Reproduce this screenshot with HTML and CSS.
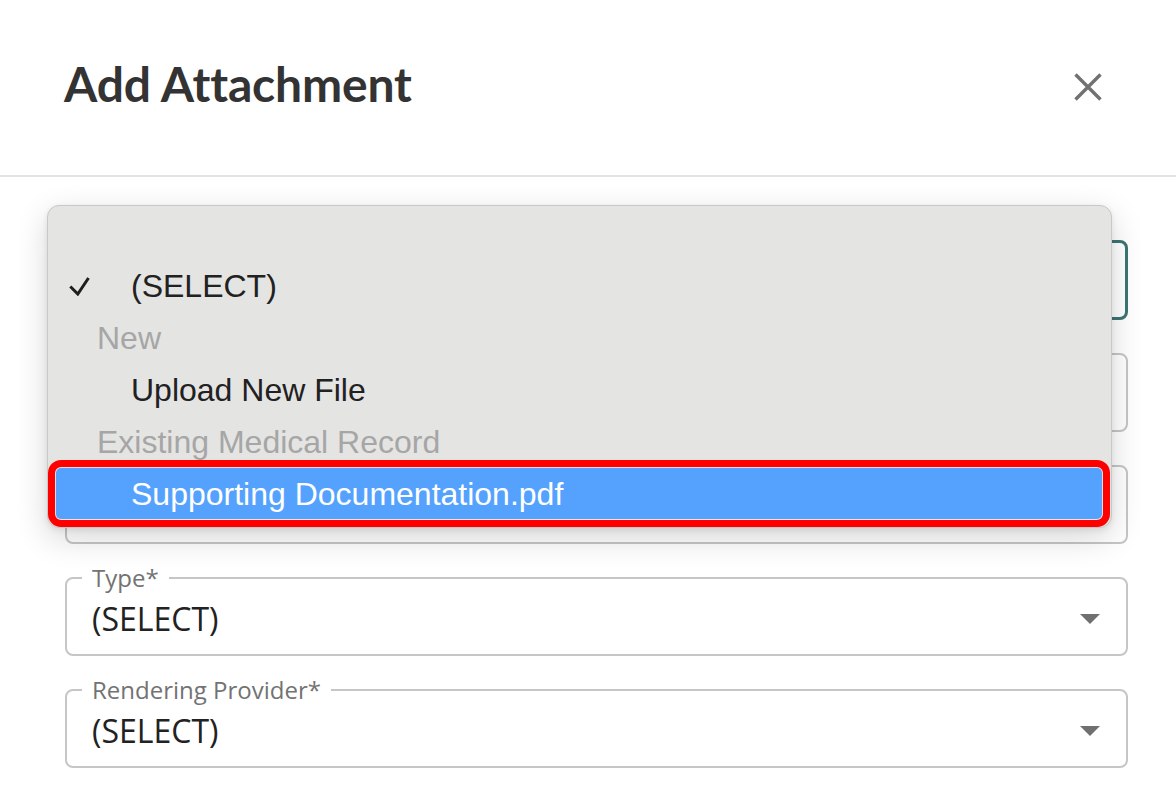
FILE: index.html
```html
<!DOCTYPE html>
<html lang="en">
<head>
<meta charset="utf-8">
<title>Add Attachment</title>
<link rel="stylesheet" href="styles.css">
</head>
<body>
<div class="dialog">
  <header class="header">
    <h1 class="title">Add Attachment</h1>
    <button class="close" aria-label="Close">
      <svg width="28" height="28" viewBox="0 0 28 28"><path d="M1.5 1.5L26.5 26.5M26.5 1.5L1.5 26.5" stroke="#717171" stroke-width="3.4" stroke-linecap="butt" fill="none"/></svg>
    </button>
  </header>
  <main class="content">
    <fieldset class="field focused">
      <legend class="label">&nbsp;</legend>
      <div class="row"><span class="value"></span><span class="arrow"></span></div>
    </fieldset>
    <fieldset class="field">
      <legend class="label">&nbsp;</legend>
      <div class="row"><span class="value"></span></div>
    </fieldset>
    <fieldset class="field">
      <legend class="label">&nbsp;</legend>
      <div class="row"><span class="value"></span></div>
    </fieldset>
    <fieldset class="field">
      <legend class="label">Type*</legend>
      <div class="row"><span class="value">(SELECT)</span><span class="arrow"></span></div>
    </fieldset>
    <fieldset class="field">
      <legend class="label">Rendering Provider*</legend>
      <div class="row"><span class="value">(SELECT)</span><span class="arrow"></span></div>
    </fieldset>

    <div class="menu" role="listbox">
      <div class="opt"><span class="check"><svg width="21" height="20" viewBox="0 0 21 20"><path d="M1.3 10.5L8.8 18L19.5 2" stroke="#1e1e1e" stroke-width="3" fill="none" stroke-linejoin="miter"/></svg></span><span>(SELECT)</span></div>
      <div class="group">New</div>
      <div class="opt"><span class="check"></span><span>Upload New File</span></div>
      <div class="group">Existing Medical Record</div>
      <div class="opt active"><span class="check"></span><span>Supporting Documentation.pdf</span></div>
    </div>
  </main>
</div>
</body>
</html>
```

FILE: styles.css
```css
html, body {
  margin: 0;
  padding: 0;
  background: #ffffff;
}

.dialog {
  width: 1176px;
  height: 796px;
  overflow: hidden;
  position: relative;
}

.header {
  height: 177px;
  box-sizing: border-box;
  padding: 56px 74px 0 64px;
  display: flex;
  justify-content: space-between;
  align-items: flex-start;
  border-bottom: 2px solid #e2e2e2;
}

.title {
  margin: 0;
  font-family: Lato, "Noto Sans", sans-serif;
  font-weight: 700;
  font-size: 48px;
  line-height: 56px;
  color: #333333;
  letter-spacing: -0.15px;
}

.close {
  margin-top: 17px;
  padding: 0;
  border: 0;
  background: none;
  width: 28px;
  height: 28px;
  display: block;
}
.close svg { display: block; }

.content {
  position: relative;
  padding: 50px 48px 0 65px;
  display: flex;
  flex-direction: column;
  gap: 20px;
}

.field {
  margin: 0;
  min-width: 0;
  padding: 7px 26px 15px 15px;
  border: 2px solid #c6c6c6;
  border-radius: 8px;
  font-family: "Open Sans", "Noto Sans", sans-serif;
}

.field.focused {
  border: 3px solid #3b7573;
}

.label {
  padding: 0 10px;
  font-size: 24px;
  line-height: 28px;
  color: #737373;
}

.row {
  display: flex;
  align-items: center;
  justify-content: space-between;
  height: 40px;
  padding-left: 10px;
}

.value {
  font-size: 32px;
  line-height: 40px;
  color: #222222;
}

.arrow {
  width: 0;
  height: 0;
  border-left: 10px solid transparent;
  border-right: 10px solid transparent;
  border-top: 10px solid #707070;
}

.menu {
  position: absolute;
  left: 47px;
  top: 28px;
  width: 1065px;
  height: 323px;
  box-sizing: border-box;
  padding: 54px 9px 7px 8px;
  background: #e4e4e3;
  border: 1px solid #c8c8c8;
  border-radius: 12px;
  box-shadow: 0 10px 32px rgba(0, 0, 0, 0.16), 0 2px 6px rgba(0, 0, 0, 0.08);
  font-family: "Liberation Sans", Arial, sans-serif;
  font-size: 32px;
}

.opt, .group {
  height: 52px;
  line-height: 52px;
  white-space: nowrap;
}

.opt {
  display: flex;
  align-items: center;
  color: #212121;
}

.check {
  width: 75px;
  flex: 0 0 75px;
  box-sizing: border-box;
  padding-left: 13px;
  display: flex;
  align-items: center;
}
.check svg { display: block; }

.group {
  padding-left: 41px;
  color: #a6a6a6;
}

.opt.active {
  height: 51px;
  background: #55a2fe;
  color: #ffffff;
  border-radius: 5px;
  outline: 7px solid #fe0000;
  outline-offset: 1px;
}
```
